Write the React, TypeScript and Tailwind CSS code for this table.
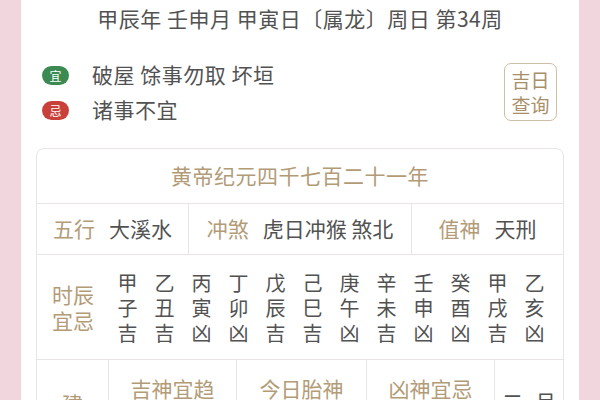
const HOURS = [
  ['甲', '子', '吉'],
  ['乙', '丑', '吉'],
  ['丙', '寅', '凶'],
  ['丁', '卯', '凶'],
  ['戊', '辰', '吉'],
  ['己', '巳', '吉'],
  ['庚', '午', '凶'],
  ['辛', '未', '吉'],
  ['壬', '申', '凶'],
  ['癸', '酉', '凶'],
  ['甲', '戌', '吉'],
  ['乙', '亥', '凶'],
]

const FONT = { fontFamily: '"Noto Sans CJK SC", "Noto Sans", sans-serif' }

export default function App() {
  return (
    <div className="w-[600px] h-[400px] overflow-hidden bg-[#f1d6dd] flex justify-center" style={FONT}>
      <div className="w-[558px] h-[400px] bg-white pt-[4px] text-[#525252]">
        <div className="text-center text-[21px] leading-[28px] tracking-[0.5px]">甲辰年 壬申月 甲寅日〔属龙〕周日 第34周</div>

        <div className="mt-[31px] pl-[21px] pr-[22px] flex justify-between">
          <div className="flex flex-col gap-[11px]">
            <div className="h-[24px] flex items-center">
              <span className="w-[27px] h-[19px] rounded-full bg-[#3b8a52] text-white text-[12px] leading-[19px] text-center">宜</span>
              <span className="ml-[23px] text-[21px] tracking-[0.5px]">破屋 馀事勿取 坏垣</span>
            </div>
            <div className="h-[24px] flex items-center">
              <span className="w-[27px] h-[19px] rounded-full bg-[#c9403b] text-white text-[12px] leading-[19px] text-center">忌</span>
              <span className="ml-[23px] text-[21px] tracking-[0.5px]">诸事不宜</span>
            </div>
          </div>
          <div className="w-[53px] h-[58px] rounded-[7px] border-[1.5px] border-[#cdbfa4] flex flex-col items-center justify-center text-[19px] leading-[25px] text-[#a98f69]">
            <span>吉日</span>
            <span>查询</span>
          </div>
        </div>

        <div className="mt-[26px] mx-[15px] rounded-t-[8px] border border-[#e9e5e5]">
          <div className="h-[55px] flex items-center justify-center text-[21px] tracking-[0.5px] text-[#b39b77] border-b border-[#e9e5e5]">
            黄帝纪元四千七百二十一年
          </div>

          <div className="h-[51px] flex text-[21px] border-b border-[#e9e5e5]">
            <div className="w-[152px] flex items-center justify-center gap-[14px] border-r border-[#e9e5e5]">
              <span className="text-[#b39b77]">五行</span>
              <span>大溪水</span>
            </div>
            <div className="w-[223px] flex items-center justify-center gap-[14px] border-r border-[#e9e5e5]">
              <span className="text-[#b39b77]">冲煞</span>
              <span>虎日冲猴 煞北</span>
            </div>
            <div className="flex-1 flex items-center justify-center gap-[14px]">
              <span className="text-[#b39b77]">值神</span>
              <span>天刑</span>
            </div>
          </div>

          <div className="h-[105px] flex items-center border-b border-[#e9e5e5]">
            <div className="w-[72px] flex flex-col items-center text-[21px] leading-[26px] text-[#b39b77]">
              <span>时辰</span>
              <span>宜忌</span>
            </div>
            <div className="grid grid-cols-12 w-[444px]">
              {HOURS.map((h, i) => (
                <div key={i} className="flex flex-col items-center text-[20px] leading-[25px]">
                  {h.map((c, j) => (
                    <span key={j}>{c}</span>
                  ))}
                </div>
              ))}
            </div>
          </div>

          <div className="h-[90px] flex">
            <div className="w-[72px] flex justify-center pt-[28px] text-[21px] text-[#b39b77] border-r border-[#e9e5e5]">建</div>
            <div className="w-[128px] flex justify-center pt-[13px] text-[21px] text-[#b39b77] border-r border-[#e9e5e5]">吉神宜趋</div>
            <div className="w-[130px] flex justify-center pt-[13px] text-[21px] text-[#b39b77] border-r border-[#e9e5e5]">今日胎神</div>
            <div className="w-[128px] flex justify-center pt-[13px] text-[21px] text-[#b39b77] border-r border-[#e9e5e5]">凶神宜忌</div>
            <div className="flex-1 flex justify-center gap-[12px] pt-[26px] text-[21px]">
              <span>二</span>
              <span>月</span>
            </div>
          </div>
        </div>
      </div>
    </div>
  )
}
